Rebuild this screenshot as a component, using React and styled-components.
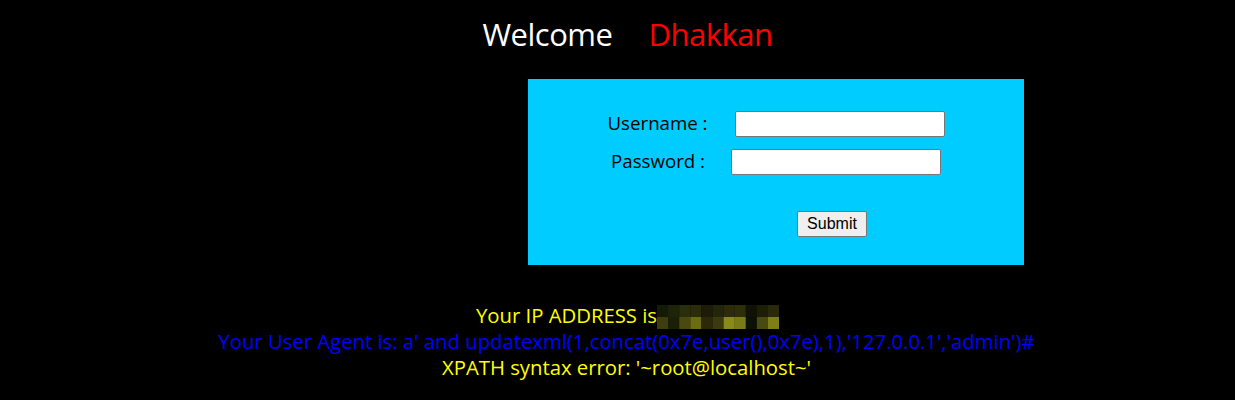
import React from 'react';
import styled, { createGlobalStyle } from 'styled-components';

const GlobalStyle = createGlobalStyle`
  body {
    margin: 0;
    background: #000;
    font-family: "Open Sans", "Noto Sans", sans-serif;
  }
`;

const Page = styled.div`
  width: 1235px;
  height: 400px;
  background: #000;
  overflow: hidden;
`;

const Header = styled.div`
  padding-top: 14px;
  text-align: center;
  font-size: 31px;
  line-height: 40px;
  color: #fff;
  letter-spacing: -0.5px;
  padding-left: 20px;
`;

const Name = styled.span`
  color: #ff0000;
  margin-left: 36px;
`;

const Box = styled.div`
  margin: 25px 0 0 528px;
  width: 496px;
  height: 186px;
  background: #00ccff;
  display: flex;
  flex-direction: column;
  align-items: center;
  padding-top: 32px;
  box-sizing: border-box;
`;

const Row = styled.div`
  display: flex;
  align-items: center;
  gap: ${(p) => p.$gap}px;
  height: 26px;
  margin-bottom: 12px;
`;

const Label = styled.span`
  font-size: 18.7px;
  color: #000;
  padding-bottom: 4px;
`;

const Input = styled.input`
  width: 210px;
  height: 26px;
  box-sizing: border-box;
  border: 1px solid #767676;
  border-radius: 2px;
  background: #fff;
  padding: 0 4px;
  margin: 0;
`;

const ButtonRow = styled.div`
  margin-top: 24px;
  padding-left: 112px;
`;

const Button = styled.button`
  width: 70px;
  height: 26px;
  box-sizing: border-box;
  font-family: "Liberation Sans", Arial, sans-serif;
  font-size: 16px;
  color: #000;
  background: #efefef;
  border: 1px solid #767676;
  border-radius: 2px;
  padding: 0;
`;

const Info = styled.div`
  margin-top: 38px;
  padding-left: 18px;
  text-align: center;
  font-size: 20.3px;
  line-height: 25.5px;
`;

const Line = styled.div`
  color: ${(p) => p.$color};
  display: flex;
  justify-content: center;
  align-items: center;
  margin-left: ${(p) => p.$shift || 0}px;
`;

const Mosaic = styled.svg`
  display: block;
  margin-top: 2px;
`;

const top = ['#141a05', '#1e2408', '#2b2e0a', '#2c2c0b', '#1c1c08', '#232608', '#2c2c0a', '#2e2e0a', '#0f1205', '#1e1e07', '#2a2a0a'];
const bottom = ['#3d3d10', '#1a1f06', '#4a4a10', '#6b6b14', '#2a2a0a', '#3a3a0e', '#8a8a1a', '#7a7a16', '#0a1205', '#4a4a10', '#7e7e16'];

const BlurredIp = () => (
  <Mosaic width="122" height="24" viewBox="0 0 122 24">
    {top.map((c, i) => (
      <rect key={'t' + i} x={i * 11.1} y="0" width="11.2" height="12" fill={c} />
    ))}
    {bottom.map((c, i) => (
      <rect key={'b' + i} x={i * 11.1} y="12" width="11.2" height="12" fill={c} />
    ))}
  </Mosaic>
);

export default function App() {
  return (
    <Page>
      <GlobalStyle />
      <Header>
        Welcome<Name>Dhakkan</Name>
      </Header>
      <Box>
        <Row $gap={27}>
          <Label>Username :</Label>
          <Input type="text" />
        </Row>
        <Row $gap={26}>
          <Label>Password :</Label>
          <Input type="text" />
        </Row>
        <ButtonRow>
          <Button>Submit</Button>
        </ButtonRow>
      </Box>
      <Info>
        <Line $color="#ffff00" $shift={2}>
          <span>Your IP ADDRESS is</span>
          <BlurredIp />
        </Line>
        <Line $color="#0000ff">Your User Agent is: a' and updatexml(1,concat(0x7e,user(),0x7e),1),'127.0.0.1','admin')#</Line>
        <Line $color="#ffff00">XPATH syntax error: '~root@localhost~'</Line>
      </Info>
    </Page>
  );
}
